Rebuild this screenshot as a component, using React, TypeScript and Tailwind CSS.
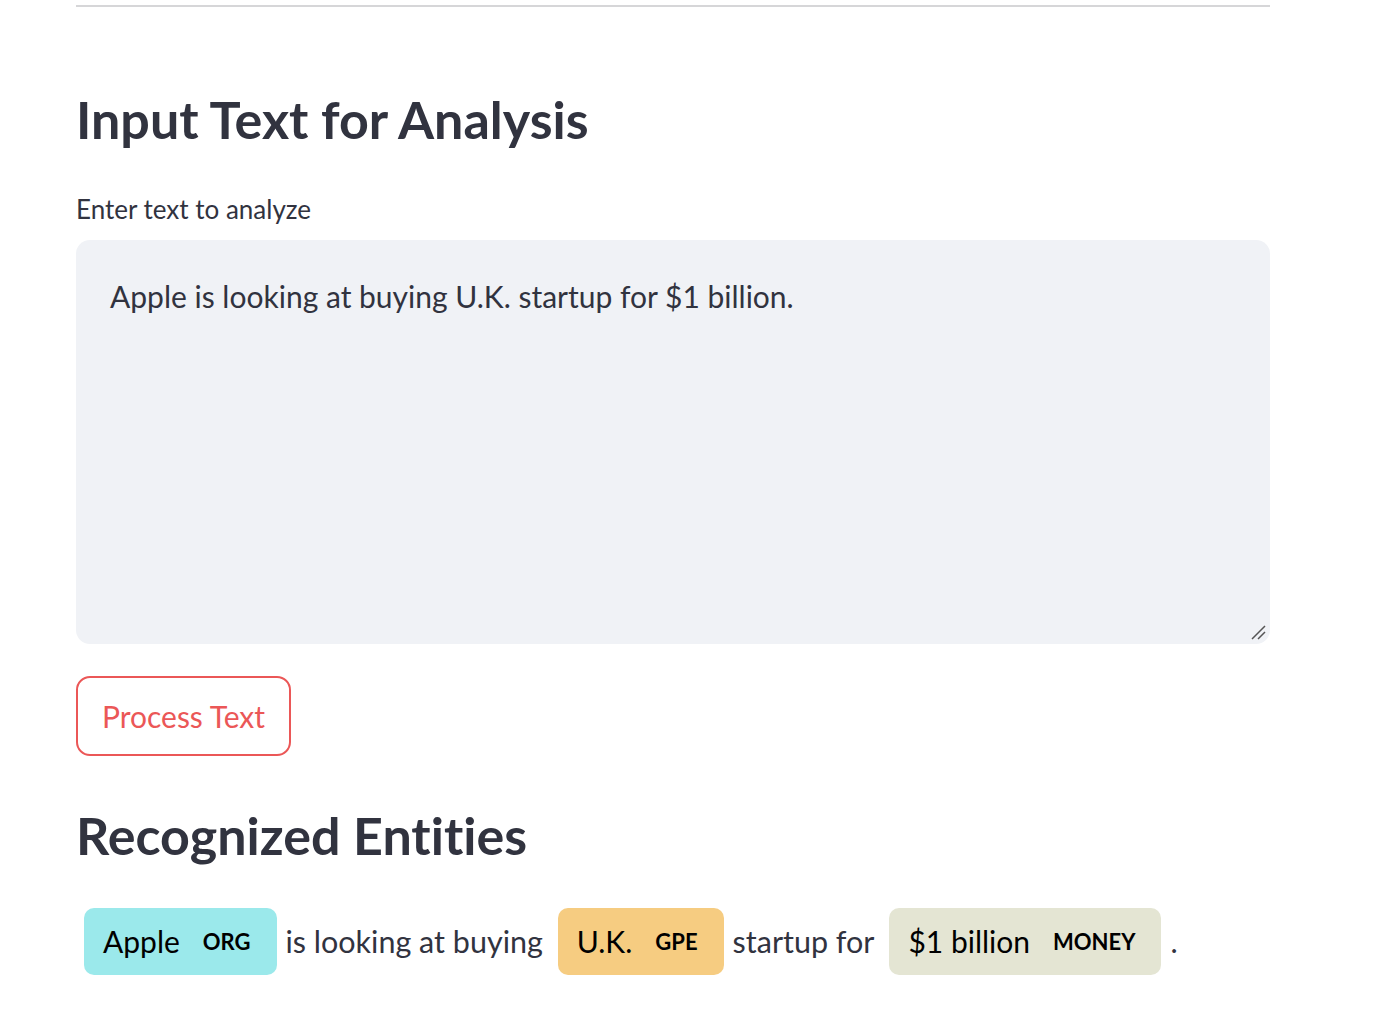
const font = { fontFamily: '"Source Sans Pro", Lato, "Noto Sans", sans-serif' };

type Piece = { text: string; label?: string; bg?: string };

const pieces: Piece[] = [
  { text: 'Apple', label: 'ORG', bg: 'bg-[#9be9eb]' },
  { text: 'is looking at buying' },
  { text: 'U.K.', label: 'GPE', bg: 'bg-[#f6cc81]' },
  { text: 'startup for' },
  { text: '$1 billion', label: 'MONEY', bg: 'bg-[#e4e5d3]' },
];

function Entity({ text, label, bg }: Piece) {
  return (
    <mark className={`flex h-[67px] items-center rounded-[10px] pl-[19px] pr-[26px] text-black ${bg}`}>
      <span className="text-[30px]">{text}</span>
      <span className="ml-[23px] text-[22px] font-bold">{label}</span>
    </mark>
  );
}

export default function App() {
  return (
    <div className="min-h-[1010px] bg-white text-[#31333f] [font-variant-ligatures:none]" style={font}>
      <div className="ml-[76px] w-[1194px]">
        <hr className="mt-[5px] border-t-2 border-[#d6d6d8]" />

        <h2 className="mt-[80px] text-[52px] font-bold leading-[64px]">Input Text for Analysis</h2>

        <label className="mt-[42px] block text-[26px] leading-[32px]">Enter text to analyze</label>
        <div className="relative mt-[15px] h-[404px] rounded-[14px] bg-[#f0f2f6] px-[34px] pt-[36px]">
          <p className="text-[30px] leading-[40px]">Apple is looking at buying U.K. startup for $1 billion.</p>
          <svg className="absolute bottom-[4px] right-[4px]" width="16" height="16" viewBox="0 0 16 16">
            <path d="M2 15 L15 2 M8 15 L15 8" stroke="#555" strokeWidth="1.5" />
          </svg>
        </div>

        <button
          type="button"
          className="mt-[32px] h-[80px] w-[215px] rounded-[14px] border-2 border-[#eb5757] text-[30px] text-[#eb5757]"
        >
          Process Text
        </button>

        <h2 className="mt-[47px] text-[52px] font-bold leading-[64px]">Recognized Entities</h2>

        <div className="ml-[8px] mt-[41px] flex items-center text-[30.5px]">
          {pieces.map((p, i) =>
            p.label ? (
              <Entity key={i} {...p} />
            ) : (
              <span key={i} className="ml-[9px] mr-[15px]">{p.text}</span>
            ),
          )}
          <span className="ml-[9px]">.</span>
        </div>
      </div>
    </div>
  );
}
